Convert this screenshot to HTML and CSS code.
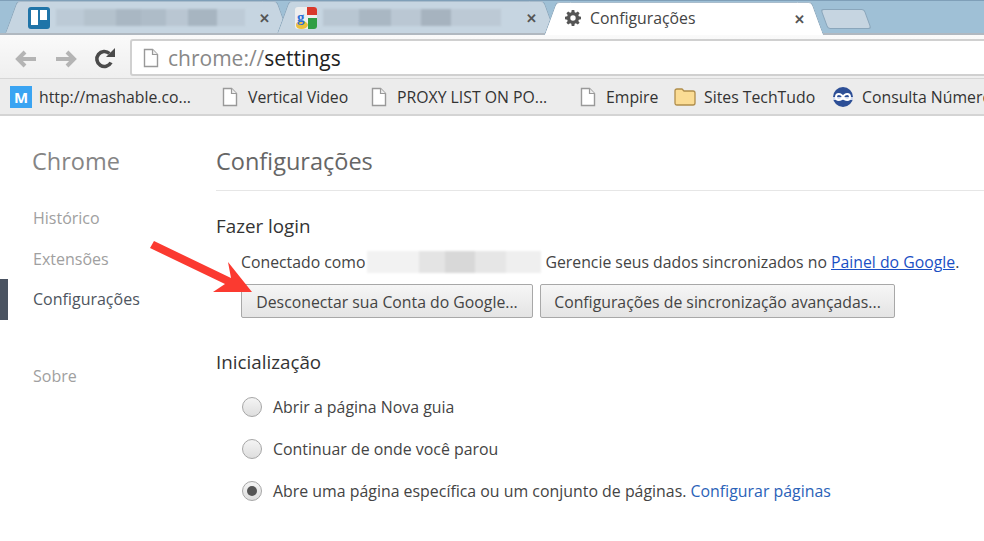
FILE: index.html
```html
<!DOCTYPE html>
<html lang="pt-BR">
<head>
    <meta charset="UTF-8">
    <title>Configurações</title>
    <link rel="stylesheet" href="styles.css">
</head>
<body>
    <div class="tabstrip">
        <div class="tab tab-first">
            <svg class="favicon" viewBox="0 0 22 22"><rect width="22" height="22" rx="3" fill="#1f74a8"/><rect x="3" y="3" width="7" height="15" fill="#fff"/><rect x="12" y="3" width="7" height="10" fill="#fff"/></svg>
            <div class="tab-blur blur-a"></div>
            <span class="tab-close">✕</span>
        </div>
        <div class="tab tab-second">
            <svg class="favicon" viewBox="0 0 22 22"><rect width="22" height="22" rx="3" fill="#eeeeee"/><path d="M12 0H19Q22 0 22 3V8H12Z" fill="#d9392b"/><path d="M13 11H22V19Q22 22 19 22H13Z" fill="#2f9e44"/><path d="M1 18Q1 14 6.500 14T13 18Q12 22 6.500 22Q1 22 1 18Z" fill="#eac03c"/><text x="2" y="15" class="g-letter">g</text></svg>
            <div class="tab-blur blur-b"></div>
            <span class="tab-close">✕</span>
        </div>
        <div class="tab tab-active">
            <svg class="gear" viewBox="0 0 16 16"><path fill="#555" fill-rule="evenodd" d="M6.7 0h2.6l.4 2.2 1.2.5L12.8 1.400l1.800 1.800-1.300 1.900.5 1.200 2.200.4v2.600l-2.200.4-.5 1.200 1.300 1.900-1.800 1.800-1.900-1.300-1.200.5-.4 2.200H6.700l-.4-2.200-1.200-.5-1.900 1.300-1.800-1.800 1.300-1.900-.5-1.200L0 9.300V6.700l2.200-.4.5-1.200-1.300-1.900 1.800-1.800 1.900 1.300 1.200-.5zM8 5.300a2.700 2.700 0 1 0 0 5.400 2.700 2.700 0 0 0 0-5.400z"/></svg>
            <span class="tab-title">Configurações</span>
            <span class="tab-close">✕</span>
        </div>
        <div class="new-tab"></div>
    </div>

    <div class="toolbar">
        <svg class="nav-icon" viewBox="0 0 22 18"><path d="M10 2 3 9l7 7M3 9h18" fill="none" stroke="#b4b4b4" stroke-width="4"/></svg>
        <svg class="nav-icon" viewBox="0 0 22 18"><path d="M12 2l7 7-7 7M19 9H1" fill="none" stroke="#b4b4b4" stroke-width="4"/></svg>
        <svg class="nav-icon reload" viewBox="0 0 22 22"><path d="M17 14.500A7.500 7.500 0 1 1 15.500 5.500" fill="none" stroke="#4a4a4a" stroke-width="3.600"/><path d="M12 9h9V0z" fill="#4a4a4a"/></svg>
        <div class="omnibox">
            <svg class="page-icon" viewBox="0 0 16 20"><path d="M1.500 1.500h8l5 5v12h-13z" fill="#fff" stroke="#999" stroke-width="1.400"/><path d="M9.500 1.500v5h5" fill="#eee" stroke="#999" stroke-width="1.200"/></svg>
            <span class="url"><span class="url-scheme">chrome://</span>settings</span>
        </div>
    </div>

    <div class="bookmarks">
        <div class="bookmark bm-mash">
            <span class="m-icon">M</span>
            <span>http://mashable.co...</span>
        </div>
        <div class="bookmark bm-video">
            <svg class="page-icon small" viewBox="0 0 16 20"><path d="M1.500 1.500h8l5 5v12h-13z" fill="#fff" stroke="#999" stroke-width="1.400"/><path d="M9.500 1.500v5h5" fill="#eee" stroke="#999" stroke-width="1.200"/></svg>
            <span>Vertical Video</span>
        </div>
        <div class="bookmark bm-proxy">
            <svg class="page-icon small" viewBox="0 0 16 20"><path d="M1.500 1.500h8l5 5v12h-13z" fill="#fff" stroke="#999" stroke-width="1.400"/><path d="M9.500 1.500v5h5" fill="#eee" stroke="#999" stroke-width="1.200"/></svg>
            <span>PROXY LIST ON PO...</span>
        </div>
        <div class="bookmark bm-empire">
            <svg class="page-icon small" viewBox="0 0 16 20"><path d="M1.500 1.500h8l5 5v12h-13z" fill="#fff" stroke="#999" stroke-width="1.400"/><path d="M9.500 1.500v5h5" fill="#eee" stroke="#999" stroke-width="1.200"/></svg>
            <span>Empire</span>
        </div>
        <div class="bookmark bm-sites">
            <svg class="folder" viewBox="0 0 22 18"><path d="M1 3q0-2 2-2h5l2 2h9q2 0 2 2v10q0 2-2 2H3q-2 0-2-2z" fill="#fbdc94" stroke="#b08d4a" stroke-width="1.300"/></svg>
            <span>Sites TechTudo</span>
        </div>
        <div class="bookmark bm-consulta">
            <svg class="consulta" viewBox="0 0 20 20"><circle cx="10" cy="10" r="10" fill="#2d4f96"/><path d="M0 10h20v3H0z" fill="#cfd9ee"/><path d="M10 10c-2-4-7-4-7 0s5 4 7 0c2-4 7-4 7 0s-5 4-7 0z" fill="none" stroke="#fff" stroke-width="2"/></svg>
            <span>Consulta Número</span>
        </div>
    </div>

    <div class="page">
        <nav class="sidebar">
            <h1 class="side-title">Chrome</h1>
            <ul class="side-list">
                <li>Histórico</li>
                <li>Extensões</li>
                <li class="selected">Configurações</li>
                <li class="side-about">Sobre</li>
            </ul>
        </nav>
        <main class="main">
            <h2 class="main-title">Configurações</h2>

            <section class="login">
                <h3>Fazer login</h3>
                <div class="sync-line">
                    <span>Conectado como</span>
                    <div class="email-blur"></div>
                    <span>Gerencie seus dados sincronizados no <a href="#">Painel do Google</a>.</span>
                </div>
                <div class="buttons">
                    <button class="btn btn-signout">Desconectar sua Conta do Google...</button>
                    <button class="btn btn-sync">Configurações de sincronização avançadas...</button>
                </div>
            </section>

            <section class="startup">
                <h3>Inicialização</h3>
                <div class="radio-row"><span class="radio"></span>Abrir a página Nova guia</div>
                <div class="radio-row"><span class="radio"></span>Continuar de onde você parou</div>
                <div class="radio-row"><span class="radio checked"></span>Abre uma página específica ou um conjunto de páginas.&nbsp;<a class="plain-link" href="#">Configurar páginas</a></div>
            </section>
        </main>
    </div>

    <!-- seta vermelha por cima da tela -->
    <svg class="arrow" viewBox="0 0 984 541"><path d="M150 248 154 241 231 278 228 262 252 292 213 292 225 284z" fill="#fb3a30"/></svg>
</body>
</html>
```

FILE: styles.css
```css
* { box-sizing: border-box; }
html, body { margin: 0; height: 541px; overflow: hidden; }
body { font-family: "Open Sans", "Noto Sans", sans-serif; background: #fff; color: #444; position: relative; }

/* tabs */
.tabstrip { height: 35px; background: #9fc0d6; display: flex; align-items: flex-end; padding-left: 18px; border-top: 1px solid #7f9fb8; border-bottom: 2px solid #b0b8c0; }
.tab { position: relative; height: 32px; display: flex; align-items: center; background: #c6d5e1; border-top: 1px solid #a8bccc; }
.tab::before, .tab::after { content: ""; position: absolute; top: -1px; bottom: 0; width: 14px; background: inherit; border-top: 1px solid #a8bccc; }
.tab::before { left: -7px; transform: skewX(-20deg); border-left: 1px solid #8aa6bb; border-radius: 4px 0 0 0; }
.tab::after { right: -7px; transform: skewX(20deg); border-right: 1px solid #8aa6bb; border-radius: 0 4px 0 0; }
.tab > * { position: relative; z-index: 1; }
.tab-first { width: 258px; padding-left: 10px; }
.tab-second { width: 253px; margin-left: 14px; padding-left: 5px; }
.tab-active { width: 254px; margin-left: 14px; background: #fff; height: 33px; margin-bottom: -2px; z-index: 2; padding-left: 8px; padding-bottom: 2px; }
.favicon { width: 22px; height: 22px; flex: none; }
.g-letter { font-family: "Liberation Serif", serif; font-weight: bold; font-size: 15px; fill: #2a6fd6; }
.tab-blur { height: 17px; flex: none; margin-left: 6px; filter: blur(1px); }
.blur-a { width: 189px; background: linear-gradient(90deg, #bccad6 0 15%, #b4c2cd 15% 32%, #a9b7c3 32% 45%, #aebcc8 45% 58%, #b9c6d2 58% 70%, #a7b5c1 70% 85%, #bdcbd7 85% 100%); }
.blur-b { width: 178px; background: linear-gradient(90deg, #b8c6d2 0 20%, #a9b7c3 20% 38%, #bac7d3 38% 55%, #a6b3bf 55% 72%, #bcc9d5 72% 100%); }
.tab-close { position: absolute !important; right: 6px; top: 8px; font-size: 13px; line-height: 16px; font-weight: bold; color: #555; }
.gear { width: 16px; height: 16px; flex: none; }
.tab-title { margin-left: 9px; font-size: 15.800px; color: #444; }
.new-tab { width: 44px; height: 20px; margin: 0 0 4px 13px; background: #c6d5e1; border: 1px solid #8aa6bb; border-radius: 3px; transform: skewX(20deg); }

/* toolbar */
.toolbar { height: 43px; display: flex; align-items: center; background: linear-gradient(#fafafa, #efefef); padding: 4px 0 0 15px; }
.nav-icon { width: 22px; height: 18px; flex: none; margin-right: 18px; }
.reload { width: 22px; height: 22px; margin-right: 14px; margin-left: -1px; }
.omnibox { flex: 1; height: 37px; margin: -2px -4px 0 0; background: #fff; border: 2px solid #d0d0d0; border-radius: 3px; display: flex; align-items: center; padding-left: 11px; }
.page-icon { width: 16px; height: 20px; flex: none; }
.url { margin-left: 9px; font-size: 21px; color: #222; }
.url-scheme { color: #888; }

/* bookmarks */
.bookmarks { height: 38px; display: flex; align-items: center; background: #ececec; border-top: 1px solid #d6d6d6; border-bottom: 2px solid #d4d4d4; padding-left: 10px; font-size: 15.800px; color: #333; white-space: nowrap; }
.bookmark { display: flex; align-items: center; flex: none; }
.m-icon { width: 22px; height: 22px; background: #3aa4f2; color: #fff; font-weight: bold; font-size: 15px; line-height: 22px; text-align: center; margin-right: 7px; }
.page-icon.small { margin-right: 10px; }
.folder { width: 22px; height: 18px; margin-right: 8px; }
.consulta { width: 20px; height: 20px; margin-right: 9px; }
.bm-mash { width: 212px; }
.bm-video { width: 149px; }
.bm-proxy { width: 209px; }
.bm-empire { width: 94px; }
.bm-sites { width: 159px; }

/* page */
.page { display: flex; }
.sidebar { width: 216px; flex: none; padding-top: 30px; }
.side-title { margin: 0 0 0 32px; font-size: 23.500px; line-height: 30px; font-weight: 400; color: #858585; }
.side-list { list-style: none; margin: 22px 0 0; padding: 0; font-size: 16px; color: #a0a0a0; }
.side-list li { height: 40.500px; line-height: 40px; padding-left: 33px; }
.side-list .selected { color: #4e5560; border-left: 8px solid #4a5361; padding-left: 25px; }
.side-list .side-about { margin-top: 36px; }

.main { flex: 1; padding-top: 30px; }
.main-title { margin: 0; font-size: 23.500px; line-height: 30px; height: 45px; font-weight: 400; color: #666; border-bottom: 1px solid #e6e6e6; }
.login h3, .startup h3 { margin: 0; font-size: 18.800px; line-height: 24px; font-weight: 400; color: #333; }
.login { padding-top: 23px; }
.sync-line { display: flex; align-items: center; margin: 12px 0 0 25px; font-size: 15.800px; line-height: 24px; height: 24px; color: #444; white-space: nowrap; }
.email-blur { width: 174px; height: 22px; margin: 0 4px 0 2px; filter: blur(1px); background: linear-gradient(90deg, #f2f2f2 0 30%, #e4e4e4 30% 45%, #d8d8d8 45% 62%, #e6e6e6 62% 80%, #efefef 80% 100%); }
.sync-line a { color: #1a4fc4; }
.buttons { display: flex; gap: 7px; margin: 10px 0 0 25px; }
.btn { height: 34px; padding: 2px 0 0; font-family: inherit; font-size: 15.800px; color: #444; background: linear-gradient(#f6f6f6, #e4e4e4); border: 1px solid #a8a8a8; border-radius: 2px; white-space: nowrap; }
.btn-signout { width: 292px; }
.btn-sync { width: 355px; }
.startup { padding-top: 32px; }
.startup h3 { margin-bottom: 12px; }
.radio-row { display: flex; align-items: center; height: 42px; margin-left: 26px; font-size: 15.900px; color: #444; white-space: nowrap; }
.radio { width: 20px; height: 20px; margin-right: 11px; flex: none; border-radius: 50%; background: linear-gradient(#f4f4f4, #dedede); border: 1px solid #a6a6a6; position: relative; }
.radio.checked::after { content: ""; position: absolute; left: 4px; top: 4px; width: 10px; height: 10px; border-radius: 50%; background: #555; }
.plain-link { color: #2a62b8; text-decoration: none; }

.arrow { position: absolute; left: 0; top: 0; width: 984px; height: 541px; pointer-events: none; }
```
